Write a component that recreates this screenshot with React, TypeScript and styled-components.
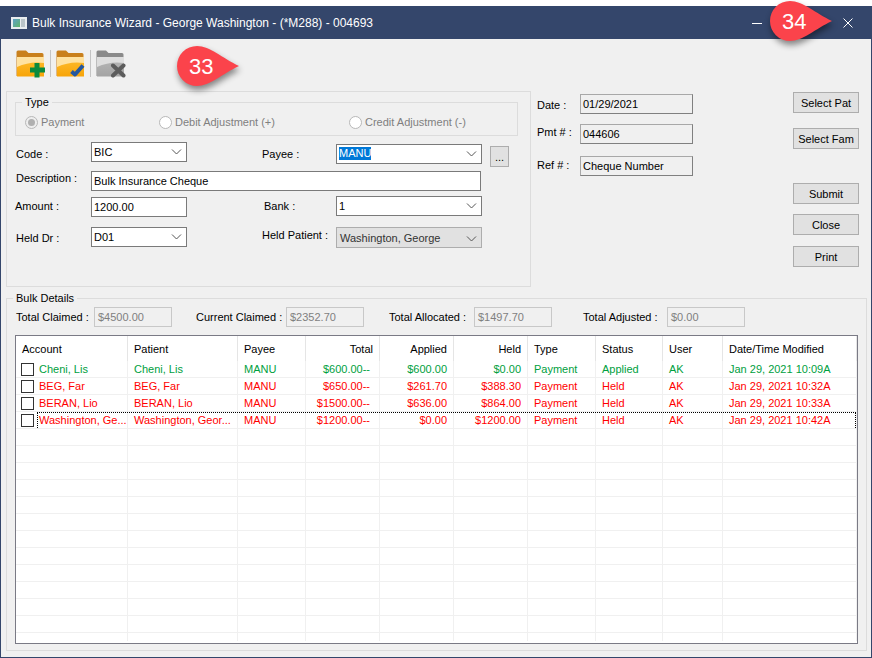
import type { ReactNode } from 'react';
import styled, { createGlobalStyle } from 'styled-components';

const UI_FONT = '"Liberation Sans", Arial, sans-serif';

const GlobalStyle = createGlobalStyle`
  html, body {
    margin: 0;
    padding: 0;
    background: #fff;
  }
  body {
    font-family: ${UI_FONT};
    font-size: 11px;
    color: #000;
  }
`;

const Page = styled.div`
  width: 872px;
  height: 658px;
  padding-top: 6px;
  box-sizing: border-box;
  overflow: hidden;
`;

const Window = styled.div`
  position: relative;
  height: 652px;
  box-sizing: border-box;
  display: flex;
  flex-direction: column;
  background: #f0f0f0;
  border: 1px solid #34466b;
  border-top: none;
`;

const TitleBar = styled.div`
  flex: none;
  height: 33px;
  display: flex;
  align-items: center;
  background: #34466b;
  color: #fff;
  padding: 0 18px 0 10px;
`;

const TitleText = styled.span`
  margin-left: 5px;
  flex: 1;
  font-size: 12px;
`;

const TitleButton = styled.svg`
  display: block;
  width: 10px;
  height: 10px;
  margin-left: 81px;
`;

const AppGlyph = styled.svg`
  display: block;
  flex: none;
  width: 16px;
  height: 12px;
`;

const Toolbar = styled.div`
  flex: none;
  height: 52px;
  display: flex;
  align-items: flex-start;
  padding: 11px 0 0 15px;
  box-sizing: border-box;
`;

const ToolIcon = styled.svg`
  display: block;
  width: 30px;
  height: 28px;
`;

const ToolDivider = styled.div`
  width: 1px;
  height: 27px;
  margin: 0 5px 0 4px;
  background: #c4c4c4;
`;

const TopSection = styled.div`
  flex: none;
  height: 200px;
  display: flex;
  padding-left: 5px;
`;

const FormBox = styled.div`
  width: 525px;
  height: 196px;
  box-sizing: border-box;
  border: 1px solid #dcdcdc;
  padding: 3px 0 0 8px;
`;

const GroupBox = styled.fieldset`
  margin: 0;
  min-width: 0;
  box-sizing: border-box;
  border: 1px solid #dcdcdc;
  padding: 0;
`;

const GroupTitle = styled.legend<{ $left: number }>`
  margin-left: ${p => p.$left}px;
  padding: 0 3px;
  font-size: 11px;
  line-height: 14px;
`;

const TypeGroup = styled(GroupBox)`
  width: 503px;
  height: 41px;
`;

const RadioRow = styled.div`
  display: grid;
  grid-template-columns: 134px 190px 1fr;
  padding: 6px 0 0 9px;
`;

const RadioItem = styled.div`
  display: flex;
  align-items: center;
  gap: 3px;
  height: 14px;
  color: #7f7f7f;
`;

const RadioCircle = styled.span<{ $checked?: boolean }>`
  flex: none;
  width: 13px;
  height: 13px;
  box-sizing: border-box;
  border: 1px solid #b8b8b8;
  border-radius: 50%;
  background: ${p => (p.$checked ? '#eeeeee' : '#fff')};
  display: flex;
  align-items: center;
  justify-content: center;
  &::after {
    content: '';
    display: ${p => (p.$checked ? 'block' : 'none')};
    width: 7px;
    height: 7px;
    border-radius: 50%;
    background: #b0b0b0;
  }
`;

const FormGrid = styled.div`
  display: grid;
  grid-template-columns: 76px 96px 75px 74px 146px 8px 19px;
  grid-template-rows: 29px 26px 30px 30px;
  align-items: start;
  margin-top: 6px;
`;

const FieldLabel = styled.div<{ $top?: number; $left?: number }>`
  margin-top: ${p => p.$top ?? 0}px;
  margin-left: ${p => p.$left ?? 0}px;
  line-height: 14px;
  white-space: nowrap;
`;

const Field = styled.div<{ $top?: number; $disabled?: boolean; $wide?: boolean }>`
  display: flex;
  align-items: center;
  justify-content: space-between;
  box-sizing: border-box;
  height: ${p => (p.$disabled ? 21 : 20)}px;
  margin-top: ${p => p.$top ?? 0}px;
  padding: ${p => (p.$disabled ? '1px 4px 0 3px' : '0 4px 1px 2px')};
  ${p => (p.$wide ? 'grid-column: 2 / -1; width: 390px;' : '')}
  background: ${p => (p.$disabled ? '#e1e1e1' : '#fff')};
  border: 1px solid ${p => (p.$disabled ? '#adadad' : '#7a7a7a')};
  color: ${p => (p.$disabled ? '#333' : '#000')};
  white-space: nowrap;
`;

const Selected = styled.span`
  background: #0078d7;
  color: #fff;
  line-height: 13px;
`;

const Chevron = styled.svg`
  display: block;
  flex: none;
  width: 11px;
  height: 6px;
  margin-top: 1px;
`;

const BrowseButton = styled.div`
  margin-top: 4px;
  grid-column: 7;
  height: 21px;
  box-sizing: border-box;
  display: flex;
  align-items: center;
  justify-content: center;
  background: #e1e1e1;
  border: 1px solid #adadad;
`;

const SideColumn = styled.div`
  margin: 3px 0 0 6px;
  width: 156px;
  display: grid;
  grid-template-columns: 43px 113px;
  grid-template-rows: 30px 32px 20px;
  align-content: start;
  align-items: start;
`;

const ReadField = styled.div`
  height: 20px;
  box-sizing: border-box;
  padding: 0 2px 1px 2px;
  display: flex;
  align-items: center;
  background: #f0f0f0;
  border: 1px solid #808080;
  border-top-color: #a8a8a8;
  border-left-color: #a8a8a8;
`;

const ButtonColumn = styled.div`
  margin-left: 100px;
  display: flex;
  flex-direction: column;
  width: 66px;
`;

const ActionButton = styled.div<{ $top: number }>`
  margin-top: ${p => p.$top}px;
  height: 21px;
  box-sizing: border-box;
  display: flex;
  align-items: center;
  justify-content: center;
  background: #e1e1e1;
  border: 1px solid #adadad;
  white-space: nowrap;
`;

const BulkGroup = styled(GroupBox)`
  flex: none;
  margin-left: 5px;
  width: 861px;
  height: 360px;
  padding: 0 0 0 8px;
`;

const SummaryRow = styled.div`
  display: flex;
  height: 20px;
  margin-top: 2px;
  padding-left: 1px;
  align-items: center;
`;

const SummaryItem = styled.div<{ $labelWidth: number; $gap?: number }>`
  display: grid;
  grid-template-columns: ${p => p.$labelWidth}px 78px;
  align-items: center;
  margin-left: ${p => p.$gap ?? 0}px;
`;

const SummaryLabel = styled.span`
  white-space: nowrap;
`;

const SummaryField = styled.div`
  height: 20px;
  box-sizing: border-box;
  padding: 0 3px;
  display: flex;
  align-items: center;
  background: #f0f0f0;
  border: 1px solid #c8c8c8;
  color: #7f7f7f;
`;

const ListFrame = styled.div`
  margin-top: 8px;
  width: 843px;
  height: 309px;
  box-sizing: border-box;
  border: 1px solid #7a7a85;
  background: #fff;
`;

const ListScroller = styled.div`
  position: relative;
  height: 305px;
  overflow: hidden;
`;

const ListTable = styled.table`
  width: 841px;
  table-layout: fixed;
  border-collapse: separate;
  border-spacing: 0;
`;

const HeaderCell = styled.th<{ $right?: boolean }>`
  height: 25px;
  padding: 0 6px;
  box-sizing: border-box;
  font-weight: normal;
  font-size: 11px;
  text-align: ${p => (p.$right ? 'right' : 'left')};
  border-right: 1px solid #e5e5e5;
  white-space: nowrap;
  overflow: hidden;
`;

const Cell = styled.td<{ $right?: boolean; $pad?: number; $tone?: string }>`
  height: 17px;
  padding: 1px ${p => p.$pad ?? 6}px 0 6px;
  box-sizing: border-box;
  font-size: 11px;
  line-height: 15px;
  color: ${p => p.$tone ?? '#000'};
  text-align: ${p => (p.$right ? 'right' : 'left')};
  border-right: 1px solid #f0f0f0;
  border-bottom: 1px solid #f0f0f0;
  white-space: nowrap;
  overflow: hidden;
`;

const AccountWrap = styled.div`
  display: flex;
  align-items: center;
  gap: 5px;
  margin-left: -1px;
`;

const CheckBox = styled.span`
  flex: none;
  width: 13px;
  height: 13px;
  box-sizing: border-box;
  border: 1px solid #333;
  background: #fff;
`;

const FocusRect = styled.div`
  position: absolute;
  left: 21px;
  right: 1px;
  top: 76px;
  height: 16px;
  box-sizing: border-box;
  border: 1px dotted #000;
  border-bottom: none;
  pointer-events: none;
`;

const Callout = styled.div<{ $x: number; $y: number }>`
  position: absolute;
  left: ${p => p.$x}px;
  top: ${p => p.$y}px;
  width: 62px;
  height: 40px;
  display: flex;
  align-items: center;
  padding: 1px 0 0 12px;
  box-sizing: border-box;
  color: #fff;
  font-size: 22px;
`;

const CalloutShape = styled.svg`
  position: absolute;
  left: 0;
  top: 0;
  width: 62px;
  height: 40px;
  overflow: visible;
  filter: drop-shadow(1px 4px 3px rgba(0, 0, 0, 0.45));
`;

const CalloutText = styled.span`
  position: relative;
`;

const GREEN = '#00a040';
const RED = '#ff0000';

const columns = [
  { title: 'Account', width: 112 },
  { title: 'Patient', width: 110 },
  { title: 'Payee', width: 68 },
  { title: 'Total', width: 74, right: true },
  { title: 'Applied', width: 74, right: true },
  { title: 'Held', width: 74, right: true },
  { title: 'Type', width: 68 },
  { title: 'Status', width: 67 },
  { title: 'User', width: 60 },
  { title: 'Date/Time Modified', width: 134 },
];

const rows = [
  { account: 'Cheni, Lis', patient: 'Cheni, Lis', total: '$600.00--', applied: '$600.00', held: '$0.00', status: 'Applied', date: 'Jan 29, 2021 10:09A', tone: GREEN },
  { account: 'BEG, Far', patient: 'BEG, Far', total: '$650.00--', applied: '$261.70', held: '$388.30', status: 'Held', date: 'Jan 29, 2021 10:32A', tone: RED },
  { account: 'BERAN, Lio', patient: 'BERAN, Lio', total: '$1500.00--', applied: '$636.00', held: '$864.00', status: 'Held', date: 'Jan 29, 2021 10:33A', tone: RED },
  { account: 'Washington, Ge...', patient: 'Washington, Geor...', total: '$1200.00--', applied: '$0.00', held: '$1200.00', status: 'Held', date: 'Jan 29, 2021 10:42A', tone: RED },
];

const emptyRows = Array.from({ length: 13 }, (_, i) => i);

function ChevronIcon() {
  return (
    <Chevron viewBox='0 0 11 6'>
      <path d='M1 0.5 L5.5 5 L10 0.5' fill='none' stroke='#555' strokeWidth='1' />
    </Chevron>
  );
}

function AppIcon() {
  return (
    <AppGlyph viewBox='0 0 16 12'>
      <defs>
        <linearGradient id='paneGrad' x1='0' y1='0' x2='1' y2='1'>
          <stop offset='0' stopColor='#5fa0c8' />
          <stop offset='1' stopColor='#5fb56a' />
        </linearGradient>
      </defs>
      <rect x='0' y='0' width='16' height='12' fill='#e8ecef' />
      <rect x='2' y='2' width='7' height='8' fill='url(#paneGrad)' />
      <rect x='10' y='2' width='4' height='8' fill='#b9c4c9' />
    </AppGlyph>
  );
}

function Folder({ id, gloss, mid, dark, back, children }: { id: string; gloss: string; mid: string; dark: string; back: string; children: ReactNode }) {
  return (
    <ToolIcon viewBox='0 0 30 28'>
      <defs>
        <linearGradient id={id} x1='0' y1='0' x2='0' y2='1'>
          <stop offset='0' stopColor={mid} />
          <stop offset='1' stopColor={dark} />
        </linearGradient>
      </defs>
      <path d='M0.5 2 Q0.5 0.5 2 0.5 H10 L12.5 3 H26 Q27.5 3 27.5 4.5 V26 H0.5 Z' fill={back} />
      <path d='M1 7 H28 L28 26.5 H1 Z' fill={`url(#${id})`} />
      <path d='M1 7 H28 V13 Q14 11 1 17 Z' fill={gloss} />
      {children}
    </ToolIcon>
  );
}

function CalloutPin({ x, y, label }: { x: number; y: number; label: string }) {
  return (
    <Callout $x={x} $y={y}>
      <CalloutShape viewBox='0 0 62 40'>
        <path d='M20 0 C33 0 45 12 62 20 C45 28 33 40 20 40 A20 20 0 0 1 20 0 Z' fill='#fb434b' />
      </CalloutShape>
      <CalloutText>{label}</CalloutText>
    </Callout>
  );
}

export default function App() {
  return (
    <Page>
      <GlobalStyle />
      <Window>
        <TitleBar>
          <AppIcon />
          <TitleText>Bulk Insurance Wizard - George Washington - (*M288) - 004693</TitleText>
          <TitleButton viewBox='0 0 10 10'>
            <path d='M0 5.5 H10' stroke='#fff' strokeWidth='1' />
          </TitleButton>
          <TitleButton viewBox='0 0 10 10'>
            <path d='M0.5 0.5 L9.5 9.5 M9.5 0.5 L0.5 9.5' stroke='#fff' strokeWidth='1' />
          </TitleButton>
        </TitleBar>

        <Toolbar>
          <Folder id='folderAdd' gloss='#ffe2a0' mid='#ffbe2e' dark='#f7a409' back='#c9801c'>
            <path d='M18.5 13 H23.5 V17.5 H29 V22.5 H23.5 V27.5 H18.5 V22.5 H14 V17.5 H18.5 Z' fill='#0b8a3e' />
          </Folder>
          <ToolDivider />
          <Folder id='folderOk' gloss='#ffe2a0' mid='#ffbe2e' dark='#f7a409' back='#c9801c'>
            <path d='M15.5 21.5 L19 24.5 L27 15.5' fill='none' stroke='#24579f' strokeWidth='4' strokeLinejoin='round' />
          </Folder>
          <ToolDivider />
          <Folder id='folderOff' gloss='#dedede' mid='#b8b8b8' dark='#a4a4a4' back='#8a8a8a'>
            <path d='M17 15.5 L27.5 25.5 M27.5 15.5 L17 25.5' fill='none' stroke='#5c5c5c' strokeWidth='4' strokeLinecap='round' />
          </Folder>
        </Toolbar>

        <TopSection>
          <FormBox>
            <TypeGroup>
              <GroupTitle $left={6}>Type</GroupTitle>
              <RadioRow>
                <RadioItem><RadioCircle $checked />Payment</RadioItem>
                <RadioItem><RadioCircle />Debit Adjustment (+)</RadioItem>
                <RadioItem><RadioCircle />Credit Adjustment (-)</RadioItem>
              </RadioRow>
            </TypeGroup>
            <FormGrid>
              <FieldLabel $top={5} $left={1}>Code :</FieldLabel>
              <Field><span>BIC</span><ChevronIcon /></Field>
              <span />
              <FieldLabel $top={5}>Payee :</FieldLabel>
              <Field $top={2}><Selected>MANU</Selected><ChevronIcon /></Field>
              <span />
              <BrowseButton>...</BrowseButton>

              <FieldLabel $left={1}>Description :</FieldLabel>
              <Field $wide>Bulk Insurance Cheque</Field>

              <FieldLabel $top={2}>Amount :</FieldLabel>
              <Field>1200.00</Field>
              <span />
              <FieldLabel $top={2} $left={2}>Bank :</FieldLabel>
              <Field $top={-1}><span>1</span><ChevronIcon /></Field>
              <span />
              <span />

              <FieldLabel $top={4} $left={1}>Held Dr :</FieldLabel>
              <Field><span>D01</span><ChevronIcon /></Field>
              <span />
              <FieldLabel $top={1}>Held Patient :</FieldLabel>
              <Field $disabled><span>Washington, George</span><ChevronIcon /></Field>
            </FormGrid>
          </FormBox>

          <SideColumn>
            <FieldLabel $top={4}>Date :</FieldLabel>
            <ReadField>01/29/2021</ReadField>
            <FieldLabel $top={1}>Pmt # :</FieldLabel>
            <ReadField>044606</ReadField>
            <FieldLabel $top={2}>Ref # :</FieldLabel>
            <ReadField>Cheque Number</ReadField>
          </SideColumn>

          <ButtonColumn>
            <ActionButton $top={1}>Select Pat</ActionButton>
            <ActionButton $top={15}>Select Fam</ActionButton>
            <ActionButton $top={34}>Submit</ActionButton>
            <ActionButton $top={10}>Close</ActionButton>
            <ActionButton $top={11}>Print</ActionButton>
          </ButtonColumn>
        </TopSection>

        <BulkGroup>
          <GroupTitle $left={-2}>Bulk Details</GroupTitle>
          <SummaryRow>
            <SummaryItem $labelWidth={78}>
              <SummaryLabel>Total Claimed :</SummaryLabel>
              <SummaryField>$4500.00</SummaryField>
            </SummaryItem>
            <SummaryItem $labelWidth={90} $gap={24}>
              <SummaryLabel>Current Claimed :</SummaryLabel>
              <SummaryField>$2352.70</SummaryField>
            </SummaryItem>
            <SummaryItem $labelWidth={85} $gap={25}>
              <SummaryLabel>Total Allocated :</SummaryLabel>
              <SummaryField>$1497.70</SummaryField>
            </SummaryItem>
            <SummaryItem $labelWidth={84} $gap={31}>
              <SummaryLabel>Total Adjusted :</SummaryLabel>
              <SummaryField>$0.00</SummaryField>
            </SummaryItem>
          </SummaryRow>

          <ListFrame>
            <ListScroller>
              <ListTable>
                <colgroup>
                  {columns.map(c => (
                    <col key={c.title} width={c.width} />
                  ))}
                </colgroup>
                <thead>
                  <tr>
                    {columns.map(c => (
                      <HeaderCell key={c.title} $right={c.right}>{c.title}</HeaderCell>
                    ))}
                  </tr>
                </thead>
                <tbody>
                  {rows.map(r => (
                    <tr key={r.date}>
                      <Cell $tone={r.tone}>
                        <AccountWrap>
                          <CheckBox />
                          {r.account}
                        </AccountWrap>
                      </Cell>
                      <Cell $tone={r.tone}>{r.patient}</Cell>
                      <Cell $tone={r.tone}>MANU</Cell>
                      <Cell $tone={r.tone} $right $pad={9}>{r.total}</Cell>
                      <Cell $tone={r.tone} $right>{r.applied}</Cell>
                      <Cell $tone={r.tone} $right>{r.held}</Cell>
                      <Cell $tone={r.tone}>Payment</Cell>
                      <Cell $tone={r.tone}>{r.status}</Cell>
                      <Cell $tone={r.tone}>AK</Cell>
                      <Cell $tone={r.tone}>{r.date}</Cell>
                    </tr>
                  ))}
                  {emptyRows.map(i => (
                    <tr key={i}>
                      {columns.map(c => (
                        <Cell key={c.title} />
                      ))}
                    </tr>
                  ))}
                </tbody>
              </ListTable>
              <FocusRect />
            </ListScroller>
          </ListFrame>
        </BulkGroup>

        <CalloutPin x={176} y={40} label='33' />
        <CalloutPin x={769} y={-5} label='34' />
      </Window>
    </Page>
  );
}
